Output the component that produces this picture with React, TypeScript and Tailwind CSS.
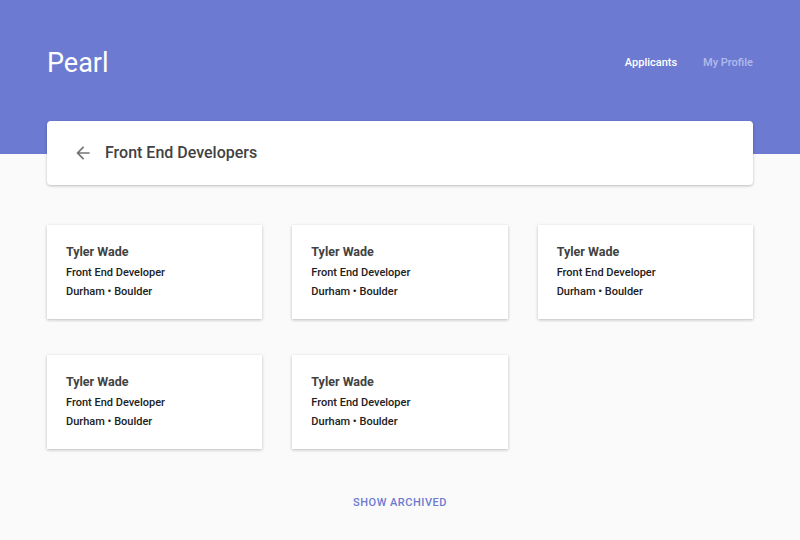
const applicants = [0, 1, 2, 3, 4].map(() => ({
  name: "Tyler Wade",
  role: "Front End Developer",
  location: "Durham • Boulder",
}));

function BackArrow() {
  return (
    <svg width="20" height="20" viewBox="0 0 24 24" className="text-[#757575]" fill="currentColor">
      <path d="M20 11H7.83l5.59-5.59L12 4l-8 8 8 8 1.41-1.41L7.83 13H20v-2z" />
    </svg>
  );
}

export default function App() {
  return (
    <div className="min-h-[540px] bg-[#fafafa] font-['Roboto',sans-serif]">
      <header className="h-[154px] bg-[#6c7ad2]">
        <div className="mx-[47px] flex items-start justify-between">
          <h1 className="pt-[45px] text-[27px] leading-[36px] font-normal text-white">Pearl</h1>
          <nav className="mt-[55px] flex gap-[26px] text-[11px] leading-[16px] font-medium">
            <a className="text-white">Applicants</a>
            <a className="text-[#b3bbec]">My Profile</a>
          </nav>
        </div>
      </header>

      <main className="mx-[47px] -mt-[33px]">
        <div className="flex h-[64px] items-center rounded bg-white shadow-[0_1px_3px_rgba(0,0,0,0.25)]">
          <span className="ml-[26px] flex w-[32px]">
            <BackArrow />
          </span>
          <h2 className="text-[16px] font-medium text-[#424242]">Front End Developers</h2>
        </div>

        <div className="mt-[40px] grid grid-cols-3 gap-x-[30px] gap-y-[36px]">
          {applicants.map((a, i) => (
            <div key={i} className="h-[94px] bg-white px-[19px] pt-[17px] shadow-[0_1px_3px_rgba(0,0,0,0.25)]">
              <div className="text-[12.5px] leading-[20px] font-bold text-[#424242]">{a.name}</div>
              <div className="mt-[1px] text-[11px] leading-[19px] font-medium text-[#212121]">{a.role}</div>
              <div className="text-[11px] leading-[19px] font-medium text-[#212121]">{a.location}</div>
            </div>
          ))}
        </div>

        <div className="mt-[46px] text-center text-[11px] leading-[16px] font-medium tracking-[0.5px] text-[#6c7ad2]">
          SHOW ARCHIVED
        </div>
      </main>
    </div>
  );
}
